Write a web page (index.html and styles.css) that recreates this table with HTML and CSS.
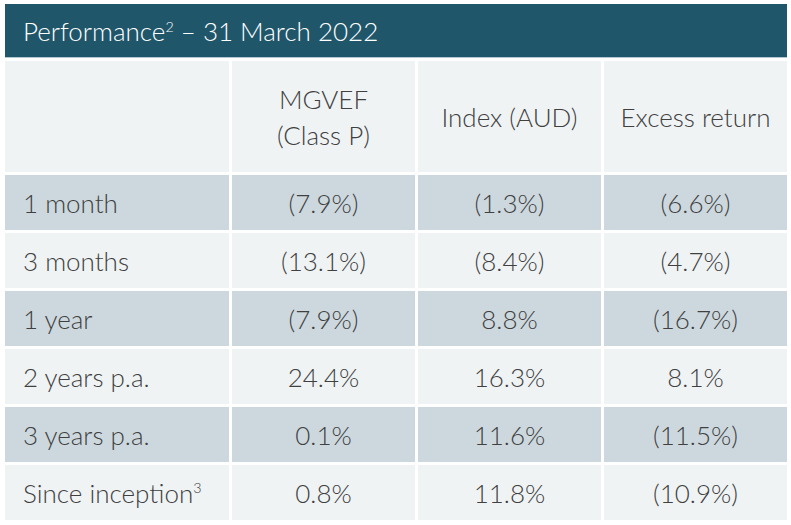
FILE: index.html
```html
<!DOCTYPE html>
<html>
<head>
<meta charset="utf-8">
<link rel="stylesheet" href="styles.css">
</head>
<body>
<div class="panel">
  <div class="title"><span>Performance<sup>2</sup> – 31 March 2022</span></div>
  <div class="grid">
    <div class="cell light label"></div>
    <div class="cell light"><span>MGVEF<br>(Class P)</span></div>
    <div class="cell light"><span>Index (AUD)</span></div>
    <div class="cell light"><span>Excess return</span></div>

    <div class="cell dark label"><span>1 month</span></div>
    <div class="cell dark"><span>(7.9%)</span></div>
    <div class="cell dark"><span>(1.3%)</span></div>
    <div class="cell dark"><span>(6.6%)</span></div>

    <div class="cell light label"><span>3 months</span></div>
    <div class="cell light"><span>(13.1%)</span></div>
    <div class="cell light"><span>(8.4%)</span></div>
    <div class="cell light"><span>(4.7%)</span></div>

    <div class="cell dark label"><span>1 year</span></div>
    <div class="cell dark"><span>(7.9%)</span></div>
    <div class="cell dark"><span>8.8%</span></div>
    <div class="cell dark"><span>(16.7%)</span></div>

    <div class="cell light label"><span>2 years p.a.</span></div>
    <div class="cell light"><span>24.4%</span></div>
    <div class="cell light"><span>16.3%</span></div>
    <div class="cell light"><span>8.1%</span></div>

    <div class="cell dark label"><span>3 years p.a.</span></div>
    <div class="cell dark"><span>0.1%</span></div>
    <div class="cell dark"><span>11.6%</span></div>
    <div class="cell dark"><span>(11.5%)</span></div>

    <div class="cell light label"><span>Since inception<sup>3</sup></span></div>
    <div class="cell light"><span>0.8%</span></div>
    <div class="cell light"><span>11.8%</span></div>
    <div class="cell light"><span>(10.9%)</span></div>
  </div>
</div>
</body>
</html>
```
FILE: styles.css
```css
html, body {
  margin: 0;
  padding: 0;
  background: #ffffff;
}
body {
  font-family: "Lato", "Open Sans", sans-serif;
  font-weight: 300;
  color: #404040;
}
.panel {
  padding: 4px 0 0 5px;
  width: 782px;
}
.title {
  height: 53px;
  background: #20566a;
  border-bottom: 1px solid #b3c8d1;
  color: #ffffff;
  font-size: 26px;
  line-height: 55px;
  padding-left: 18px;
  box-sizing: content-box;
}
.title sup, .label sup {
  font-size: 0.55em;
  line-height: 0;
  vertical-align: 0;
  position: relative;
  top: -0.65em;
}
.grid {
  margin-top: 3px;
  display: grid;
  grid-template-columns: 224px 183px 183px 183px;
  grid-template-rows: 111px repeat(6, 55px);
  gap: 3px;
}
.cell {
  display: flex;
  align-items: center;
  justify-content: center;
  text-align: center;
  font-size: 26px;
  line-height: 36px;
}
.cell.label {
  justify-content: flex-start;
  text-align: left;
  padding-left: 18px;
}
.light { background: #eff3f4; }
.dark { background: #ccd8de; }
```
